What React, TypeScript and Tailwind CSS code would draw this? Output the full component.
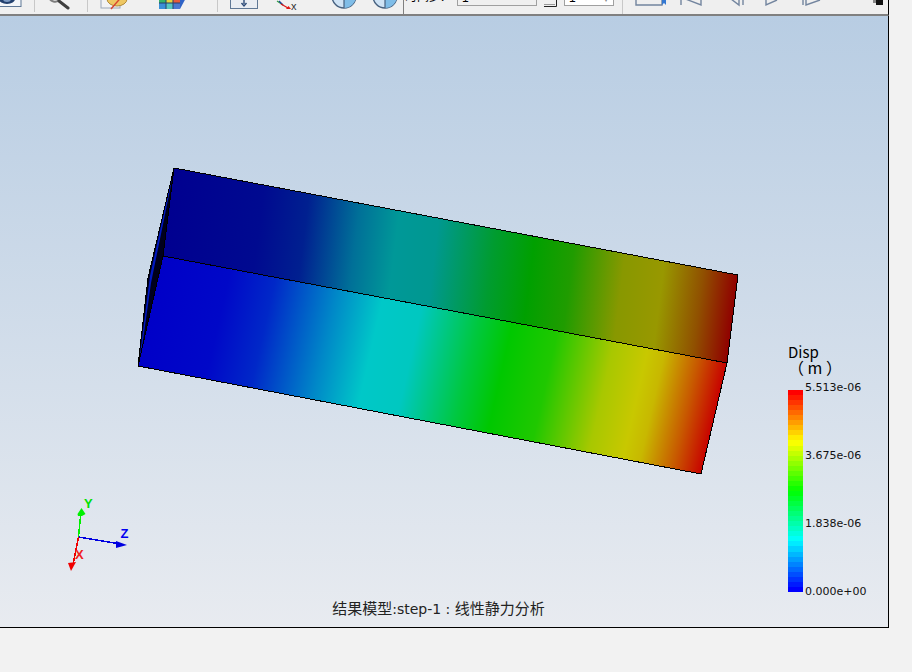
const BAND_COUNT = 40;

// rainbow ramp of the legend, t=0 is the top (red), t=1 the bottom (blue)
function bandColor(t: number) {
    const s = Math.min(t * 4, 3.999);
    const i = Math.floor(s);
    const f = Math.round((s - i) * 255);
    if (i === 0) return `rgb(255,${f},0)`;
    if (i === 1) return `rgb(${255 - f},255,0)`;
    if (i === 2) return `rgb(0,255,${f})`;
    return `rgb(0,${255 - f},255)`;
}

function Separator({ className }: { className: string }) {
    return <div className={`h-[12px] w-px shrink-0 bg-[#c8c8c8] ${className}`} />;
}

function Toolbar() {
    return (
        <div className="flex h-[16px] w-[889px] shrink-0 overflow-hidden border-b-2 border-r border-b-[#808080] border-r-black bg-[#f0f0f0]">
            <svg width="22" height="14" viewBox="0 0 22 14" className="shrink-0">
                <rect x="-6" y="-8" width="27" height="14.5" fill="#f4f6f9" stroke="#5f7896" />
                <ellipse cx="7" cy="-1" rx="8" ry="5" fill="#23406e" />
                <ellipse cx="7" cy="-1" rx="4" ry="3" fill="#7f9cc4" />
            </svg>
            <Separator className="ml-[12px]" />
            <svg width="22" height="14" viewBox="0 0 22 14" className="ml-[13px] shrink-0">
                <path d="M1 -4 a6 6 0 0 0 11 3" fill="none" stroke="#7d7d7d" strokeWidth="2" />
                <path d="M11 1 L20 8" stroke="#3f3f3f" strokeWidth="3" strokeLinecap="round" />
            </svg>
            <Separator className="ml-[17px]" />
            <svg width="30" height="14" viewBox="0 0 30 14" className="ml-[12px] shrink-0">
                <rect x="1" y="-6" width="19" height="14" fill="#f2f2f4" stroke="#9aa6b8" />
                <ellipse cx="17" cy="-1" rx="10" ry="7" fill="#eec763" stroke="#b08a3a" />
                <path d="M11 9 L24 -6" stroke="#d8432f" strokeWidth="1.4" />
            </svg>
            <svg width="29" height="14" viewBox="0 0 29 14" className="ml-[29px] shrink-0">
                <rect x="0" y="-4" width="7" height="7" fill="#35b36a" />
                <rect x="7" y="-4" width="7" height="7" fill="#e8d23d" />
                <rect x="14" y="-4" width="7" height="7" fill="#e75b3a" />
                <rect x="0" y="3" width="7" height="6" fill="#3a8fd8" />
                <rect x="7" y="3" width="7" height="6" fill="#56c7c0" />
                <rect x="14" y="3" width="7" height="6" fill="#4a78d0" />
                <path d="M21 9 L28 -4 L21 -4 Z" fill="#2f63c6" />
                <path d="M0 3 H21 M7 -4 V9 M14 -4 V9" stroke="#26406b" strokeWidth="1" />
            </svg>
            <Separator className="ml-[29px]" />
            <svg width="28" height="14" viewBox="0 0 28 14" className="ml-[12px] shrink-0">
                <rect x="0.5" y="-6" width="27" height="14.5" fill="#e9edf3" stroke="#5f7896" />
                <path d="M14 0 V4 M11.5 3 L14 6 L16.5 3" fill="none" stroke="#2b4a78" strokeWidth="1.4" />
            </svg>
            <svg width="22" height="14" viewBox="0 0 22 14" className="ml-[18px] shrink-0">
                <path d="M1 1 L7 5" stroke="#2e9e3c" strokeWidth="1.2" />
                <path d="M7 5 L3 1" stroke="#1c3f9e" strokeWidth="1.2" />
                <path d="M5 4 L12 8" stroke="#e01616" strokeWidth="1.2" />
                <path d="M10 9 L15 9 L12.5 6 Z" fill="#e01616" />
                <text x="15" y="10" fontSize="11" fill="#333" fontFamily="Liberation Sans, sans-serif">x</text>
            </svg>
            <svg width="26" height="14" viewBox="0 0 26 14" className="ml-[33px] shrink-0">
                <circle cx="13" cy="-4" r="12" fill="#cfe3f5" stroke="#47617f" strokeWidth="1.4" />
                <path d="M13 -4 H25 A12 12 0 0 1 13 8 Z" fill="#7fbde8" />
                <path d="M13 -4 V8" stroke="#47617f" strokeWidth="1.2" />
            </svg>
            <svg width="26" height="14" viewBox="0 0 26 14" className="ml-[15px] shrink-0">
                <circle cx="13" cy="-4" r="12" fill="#cfe3f5" stroke="#47617f" strokeWidth="1.4" />
                <path d="M13 -4 H25 A12 12 0 0 1 13 8 Z" fill="#7fbde8" />
                <path d="M13 -4 V8" stroke="#47617f" strokeWidth="1.2" />
            </svg>
            <div className="ml-[5px] h-[14px] w-px shrink-0 bg-[#808080]" />
            <span className="ml-[1px] mt-[-11px] w-[52px] shrink-0 text-[12px] leading-[14px] text-black [font-family:'Noto_Sans_CJK_SC',sans-serif]">
                时间步:
            </span>
            <div className="mt-[-10px] h-[16px] w-[80px] shrink-0 border border-[#a0a0a0] bg-[#f0f0f0] pl-[4px] text-[12px] leading-[14px] text-black [font-family:'Liberation_Sans',sans-serif]">
                1
            </div>
            <svg width="14" height="14" viewBox="0 0 14 14" className="ml-[7px] shrink-0">
                <path d="M0 6.5 H12.5 V0" fill="none" stroke="#222" />
                <path d="M0 4.5 H11" stroke="#999" />
            </svg>
            <div className="ml-[6px] mt-[-10px] flex h-[16px] w-[50px] shrink-0 justify-between border border-[#a0a0a0] bg-white px-[4px] text-[12px] leading-[14px] text-black [font-family:'Liberation_Sans',sans-serif]">
                <span>1</span>
                <span className="text-[#888]">▾</span>
            </div>
            <Separator className="ml-[8px] h-[14px] bg-[#a8a8a8]" />
            <div className="ml-[8px] flex h-[14px] w-[256px] shrink-0 bg-[#efefef]">
                <svg width="254" height="14" viewBox="0 0 254 14">
                    <g fill="none" stroke="#73859f" strokeWidth="1.4">
                        <path d="M5 -4 V5 H31 V-4" />
                        <path d="M50 -4 V5 M52 -2 L70 5 V-4" />
                        <path d="M96 -4 L108 5 V-4 M112 -4 V5" />
                        <path d="M135 -4 V5 L146 0" />
                        <path d="M172 -4 V5 M175 -4 V5 L189 0" />
                    </g>
                    <path d="M31 -2 H35 V5 L33 3 L31 5 Z" fill="#3478d2" />
                    <rect x="245" y="0" width="7" height="5" fill="#111" />
                    <rect x="242" y="0" width="3" height="3" fill="#888" />
                </svg>
            </div>
        </div>
    );
}

function Model() {
    return (
        <svg width="887" height="611" viewBox="0 16 887 611" className="absolute inset-0">
            <defs>
                <linearGradient id="frontFace" gradientUnits="userSpaceOnUse" x1="163" y1="256" x2="722.5" y2="383.1">
                    <stop offset="0" stopColor="#0000c8" />
                    <stop offset="0.12" stopColor="#0008c8" />
                    <stop offset="0.2" stopColor="#0028c8" />
                    <stop offset="0.31" stopColor="#0088c8" />
                    <stop offset="0.39" stopColor="#00c8c8" />
                    <stop offset="0.46" stopColor="#00c8c0" />
                    <stop offset="0.56" stopColor="#00c840" />
                    <stop offset="0.62" stopColor="#00c800" />
                    <stop offset="0.7" stopColor="#20c800" />
                    <stop offset="0.8" stopColor="#a8c800" />
                    <stop offset="0.86" stopColor="#c8c800" />
                    <stop offset="0.89" stopColor="#c8b800" />
                    <stop offset="0.95" stopColor="#c85800" />
                    <stop offset="1" stopColor="#c80000" />
                </linearGradient>
                <linearGradient id="topFace" gradientUnits="userSpaceOnUse" x1="174" y1="168" x2="742.3" y2="239">
                    <stop offset="0" stopColor="#000090" />
                    <stop offset="0.16" stopColor="#000a90" />
                    <stop offset="0.24" stopColor="#002090" />
                    <stop offset="0.33" stopColor="#007098" />
                    <stop offset="0.4" stopColor="#009898" />
                    <stop offset="0.47" stopColor="#009890" />
                    <stop offset="0.57" stopColor="#009c30" />
                    <stop offset="0.64" stopColor="#00a000" />
                    <stop offset="0.71" stopColor="#209c00" />
                    <stop offset="0.8" stopColor="#889800" />
                    <stop offset="0.87" stopColor="#989800" />
                    <stop offset="0.94" stopColor="#905000" />
                    <stop offset="1" stopColor="#900000" />
                </linearGradient>
            </defs>
            <polygon points="174,168 148,278 138,366 163,256" fill="#00001c" />
            <polygon points="173,171 150,276 139,362 140,362 151,283 170,190" fill="#0018c0" />
            <polygon points="174,168 738,275 727,363 163,256" fill="url(#topFace)" />
            <polygon points="163,256 727,363 701,474 138,366" fill="url(#frontFace)" />
            <g fill="none" stroke="#000" shapeRendering="crispEdges">
                <path d="M174 168 L738 275 L727 363 L701 474 L138 366 L148 278 Z" />
                <path d="M174 168 L163 256 L138 366 M163 256 L727 363" />
            </g>
            <g shapeRendering="crispEdges" strokeWidth="1.5">
                <path d="M78.5 537 L81 512" stroke="#00f000" />
                <path d="M78.5 537 L120 544" stroke="#0000e0" />
                <path d="M78.5 537 L73 565" stroke="#f00000" />
            </g>
            <path d="M81.5 508 L85.5 514 L82 516 L78 516 L77.5 514 Z" fill="#00f000" />
            <path d="M127 545 L116 541 L116 548 Z" fill="#0000e0" />
            <path d="M71 571 L68 563 L76 562 Z" fill="#f00000" />
            <g fontSize="13" fontWeight="bold" fontFamily="Liberation Sans, sans-serif">
                <text x="84" y="508" fill="#00e000">Y</text>
                <text x="120.5" y="538" fill="#0000f0">Z</text>
                <text x="75" y="559" fill="#f02020">X</text>
            </g>
        </svg>
    );
}

function Legend() {
    const labels = ['5.513e-06', '3.675e-06', '1.838e-06', '0.000e+00'];
    return (
        <div className="absolute left-[788px] top-[327px] w-[90px] text-black">
            <div className="h-[16px] text-[15px] leading-[17px] [font-family:'Noto_Sans_CJK_SC',sans-serif]">Disp</div>
            <div className="h-[31px] text-[16px] leading-[17px] [font-family:'Noto_Sans_CJK_SC',sans-serif]">（ m ）</div>
            <div className="flex h-[202px]">
                <div className="flex w-[15px] flex-col">
                    {Array.from({ length: BAND_COUNT }, (_, i) => (
                        <div key={i} className="flex-1" style={{ backgroundColor: bandColor(i / (BAND_COUNT - 1)) }} />
                    ))}
                </div>
                <div className="ml-[2px] mt-[-9px] flex h-[218px] flex-col justify-between text-[11px] leading-[14px] text-[#111] [font-family:'DejaVu_Sans',sans-serif]">
                    {labels.map((label) => (
                        <span key={label} className="h-[14px]">{label}</span>
                    ))}
                </div>
            </div>
        </div>
    );
}

export default function App() {
    return (
        <div className="flex h-[672px] w-[912px] flex-col overflow-hidden bg-[#f2f2f2]">
            <Toolbar />
            <div className="relative h-[612px] w-[889px] shrink-0 overflow-hidden border-b border-r border-black bg-gradient-to-b from-[#b8cde3] to-[#e8ebf0]">
                <Model />
                <Legend />
                <div className="absolute bottom-[8px] left-0 w-[877px] text-center text-[15px] leading-[20px] text-[#222] [font-family:'Noto_Sans_CJK_SC',sans-serif]">
                    结果模型<span className="text-[14px] [font-family:'DejaVu_Sans',sans-serif]">:step-1 : </span>线性静力分析
                </div>
            </div>
        </div>
    );
}
